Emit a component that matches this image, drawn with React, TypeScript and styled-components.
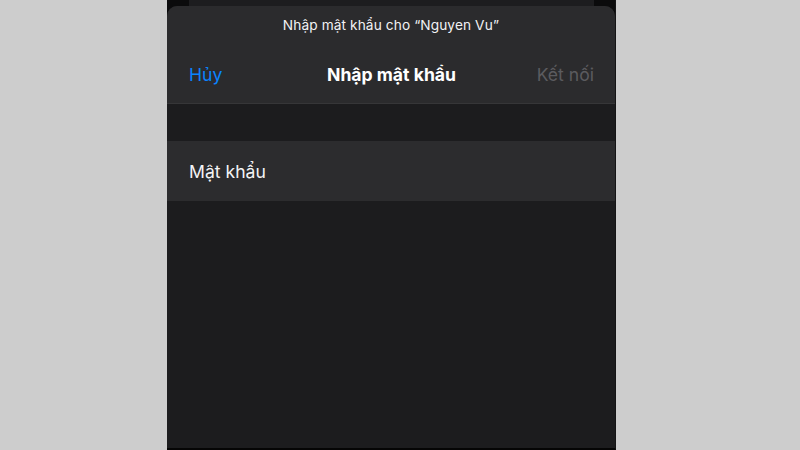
import styled, { createGlobalStyle } from 'styled-components';

const GlobalStyle = createGlobalStyle`
    html, body {
        margin: 0;
        padding: 0;
        background: #cdcdcd;
        font-family: Inter, "Noto Sans", "DejaVu Sans", sans-serif;
        -webkit-font-smoothing: antialiased;
    }
`;

const Page = styled.div`
    display: flex;
    padding-left: 167px;
    width: 800px;
    height: 450px;
    overflow: hidden;
    box-sizing: border-box;
`;

const Phone = styled.div`
    display: flex;
    flex-direction: column;
    width: 449px;
    height: 450px;
    background: #0b0b0c;
    border-right: 1px solid #141415;
    border-bottom: 2px solid #050505;
    box-sizing: border-box;
`;

const BackSheet = styled.div`
    height: 6px;
    margin: 0 21px 0 22px;
    background: #1d1d1f;
`;

const Sheet = styled.div`
    flex: 1;
    display: flex;
    flex-direction: column;
    background: #1c1c1e;
    border-radius: 10px 10px 0 0;
    overflow: hidden;
`;

const Header = styled.div`
    display: flex;
    flex-direction: column;
    height: 98px;
    background: #2b2b2d;
    border-bottom: 1px solid #363638;
    box-sizing: border-box;
`;

const Prompt = styled.div`
    padding-top: 11px;
    text-align: center;
    color: #f2f2f4;
    font-size: 13.7px;
    letter-spacing: 0.1px;
`;

const NavBar = styled.div`
    display: grid;
    grid-template-columns: 1fr auto 1fr;
    align-items: center;
    padding: 0 21px 0 22px;
    margin-top: 31px;
`;

const NavButton = styled.span<{ $tone: 'blue' | 'muted'; $end?: boolean }>`
    font-size: 17.6px;
    color: ${(p) => (p.$tone === 'blue' ? '#0a84ff' : '#5b5b5f')};
    justify-self: ${(p) => (p.$end ? 'end' : 'start')};
`;

const Title = styled.span`
    font-size: 17.6px;
    font-weight: 700;
    color: #ffffff;
`;

const Gap = styled.div`
    height: 37px;
`;

const FieldRow = styled.div`
    display: flex;
    align-items: center;
    height: 60px;
    padding-left: 22px;
    background: #2c2c2e;
    color: #f4f4f6;
    font-size: 17.6px;
`;

export default function App() {
    return (
        <>
            <GlobalStyle />
            <Page>
                <Phone>
                    <BackSheet />
                    <Sheet>
                        <Header>
                            <Prompt>Nhập mật khẩu cho “Nguyen Vu”</Prompt>
                            <NavBar>
                                <NavButton $tone="blue">Hủy</NavButton>
                                <Title>Nhập mật khẩu</Title>
                                <NavButton $tone="muted" $end>
                                    Kết nối
                                </NavButton>
                            </NavBar>
                        </Header>
                        <Gap />
                        <FieldRow>Mật khẩu</FieldRow>
                    </Sheet>
                </Phone>
            </Page>
        </>
    );
}
